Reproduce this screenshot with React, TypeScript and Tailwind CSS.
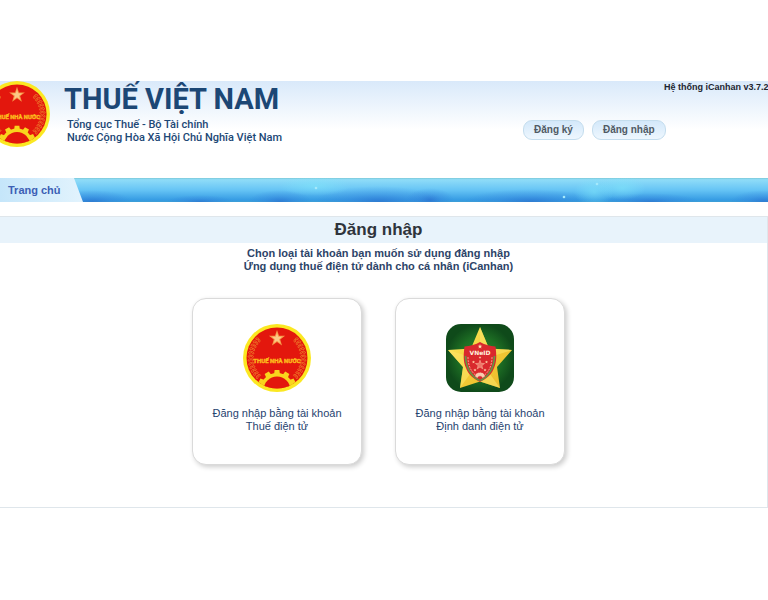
import React from "react";

const ARIAL = "font-['Liberation_Sans',Arial,sans-serif]";
const ROBOTO = "font-['Roboto',sans-serif]";

function starPoints(cx: number, cy: number, outer: number, inner: number) {
  return Array.from({ length: 10 }, (_, i) => {
    const r = i % 2 === 0 ? outer : inner;
    const a = (Math.PI / 5) * i - Math.PI / 2;
    return `${(cx + r * Math.cos(a)).toFixed(2)},${(cy + r * Math.sin(a)).toFixed(2)}`;
  }).join(" ");
}

function Seal({ className }: { className: string }) {
  const leaves = Array.from({ length: 12 }, (_, i) => -44 + i * 8);
  const teeth = [-62, -31, 0, 31, 62];
  return (
    <svg viewBox="0 0 68 68" className={className} role="img" aria-label="Thuế Nhà Nước">
      <defs>
        <clipPath id="seal-disc">
          <circle cx="34" cy="34" r="30.5" />
        </clipPath>
      </defs>
      <circle cx="34" cy="34" r="34" fill="#fbe822" />
      <circle cx="34" cy="34" r="30.5" fill="#e3170d" />
      {leaves.map((deg) => (
        <g key={deg} fill="none" stroke="#ee7428" strokeWidth="0.8">
          <g transform={`rotate(${deg} 34 34)`}>
            <ellipse cx="61.6" cy="34" rx="1.6" ry="0.9" transform="rotate(40 61.6 34)" />
            <ellipse cx="58.8" cy="34" rx="1.4" ry="0.8" transform="rotate(-40 58.8 34)" />
          </g>
          <g transform={`rotate(${-deg} 34 34)`}>
            <ellipse cx="6.4" cy="34" rx="1.6" ry="0.9" transform="rotate(-40 6.4 34)" />
            <ellipse cx="9.2" cy="34" rx="1.4" ry="0.8" transform="rotate(40 9.2 34)" />
          </g>
        </g>
      ))}
      <polygon points={starPoints(34, 14.5, 8.5, 3.4)} fill="#f79a4b" />
      <polygon points={starPoints(34, 14.5, 5.5, 2.2)} fill="#fcc987" />
      <g clipPath="url(#seal-disc)">
        {teeth.map((deg) => (
          <polygon
            key={deg}
            points="31,51 31.6,46 36.4,46 37,51"
            fill="#f9d51d"
            transform={`rotate(${deg} 34 66)`}
          />
        ))}
        <circle cx="34" cy="66" r="17" fill="#f9d51d" />
        <circle cx="34" cy="66" r="13.4" fill="#e3170d" />
      </g>
      <text
        x="34"
        y="39"
        textAnchor="middle"
        className="font-['Roboto',sans-serif] text-[6px] font-bold"
        fill="#fdb91c"
        stroke="#fdb91c"
        strokeWidth="0.4"
      >
        THUẾ NHÀ NƯỚC
      </text>
    </svg>
  );
}

function VneidLogo({ className }: { className: string }) {
  return (
    <svg viewBox="0 0 68 68" className={className} role="img" aria-label="VNeID">
      <defs>
        <radialGradient id="vneid-bg">
          <stop offset="0" stopColor="#2f8a2c" />
          <stop offset="0.6" stopColor="#1e6f24" />
          <stop offset="1" stopColor="#0f4a1a" />
        </radialGradient>
        <linearGradient id="vneid-star" x1="0" y1="0" x2="1" y2="1">
          <stop offset="0" stopColor="#fdf06a" />
          <stop offset="0.5" stopColor="#f3cb35" />
          <stop offset="1" stopColor="#e9b92c" />
        </linearGradient>
      </defs>
      <rect width="68" height="68" rx="15" fill="url(#vneid-bg)" />
      <polygon
        points="34,3 43,24.5 66,26 51,43 54,64 34,57.5 14,64 17,43 2,26 25,24.5"
        fill="url(#vneid-star)"
      />
      <path
        d="M34 3V57.5L54 64L34 36L66 26L43 24.5zM34 36L2 26L17 43zM34 36L14 64L17 43z"
        fill="#fbe567"
        opacity="0.6"
      />
      <path d="M18.5 22.5C24 22 30 20.5 34 18C38 20.5 44 22 49.5 22.5C50.5 31 51 37 48 44C45.5 51 40 55 34 58C28 55 22.5 51 20 44C17 37 17.5 31 18.5 22.5z" fill="#d9292d" />
      <path d="M19.5 32C20 45 25 52 33.5 56.5M48.5 32C48 45 43 52 34.5 56.5" fill="none" stroke="#5f9a45" strokeWidth="1.6" />
      <path d="M22 33C22 43 26 49 32 53M46 33C46 43 42 49 36 53" fill="none" stroke="#f6bf9f" strokeWidth="0.8" strokeDasharray="2 1" />
      <polygon points={starPoints(34, 22.5, 2.4, 1)} fill="#ffe6b5" />
      <text x="34" y="31" textAnchor="middle" fill="#fff2df" className="font-['DejaVu_Sans',sans-serif] text-[6px] font-bold">
        VNeID
      </text>
      <polygon points={starPoints(34, 41, 4.8, 2)} fill="#ef7668" stroke="#fbc3a4" strokeWidth="0.5" />
      <g fill="#ffd4a8">
        <polygon points={starPoints(34, 33.5, 1.4, 0.6)} />
        <polygon points={starPoints(27.5, 38, 1.6, 0.7)} />
        <polygon points={starPoints(40.5, 38, 1.6, 0.7)} />
        <polygon points={starPoints(29, 46, 1.6, 0.7)} />
        <polygon points={starPoints(39, 46, 1.6, 0.7)} />
      </g>
      <path d="M29 52.5C29 47 39 47 39 52.5L36.5 54C36 51.5 32 51.5 31.5 54z" fill="#f7cdb0" stroke="#d9292d" strokeWidth="0.5" strokeDasharray="1 1" />
    </svg>
  );
}

function PillButton({ children }: { children: React.ReactNode }) {
  return (
    <button
      type="button"
      className="h-5 cursor-pointer rounded-[9px] border border-[#c4ddee] bg-linear-to-b from-[#d3e8fa] to-[#eef7fe] px-[10px] text-[10px] leading-[18px] font-bold text-[#505a64]"
    >
      {children}
    </button>
  );
}

function Card({ logo, lines }: { logo: React.ReactNode; lines: string[] }) {
  return (
    <a
      href="#"
      className="flex w-[170px] flex-col items-center gap-[15px] rounded-[14px] border border-[#dadada] bg-white pt-[25px] pb-[31px] text-center text-[11px] leading-[13px] text-[#27436f] shadow-[2px_2px_5px_rgba(0,0,0,0.2)]"
    >
      {logo}
      <span>
        {lines.map((line) => (
          <span key={line} className="block">
            {line}
          </span>
        ))}
      </span>
    </a>
  );
}

function NavBackdrop() {
  return (
    <svg className="absolute inset-0 h-full w-full" viewBox="0 0 768 24" preserveAspectRatio="none" aria-hidden="true">
      <defs>
        <linearGradient id="nav-base" x1="0" y1="0" x2="0" y2="1">
          <stop offset="0" stopColor="#7cc9d8" />
          <stop offset="0.07" stopColor="#8fdcf8" />
          <stop offset="0.5" stopColor="#66c4f5" />
          <stop offset="0.92" stopColor="#359be3" />
          <stop offset="1" stopColor="#3f9fd4" />
        </linearGradient>
        <radialGradient id="nav-deep">
          <stop offset="0" stopColor="#2766cc" stopOpacity="0.6" />
          <stop offset="0.5" stopColor="#2f78d8" stopOpacity="0.28" />
          <stop offset="1" stopColor="#2f78d8" stopOpacity="0" />
        </radialGradient>
        <radialGradient id="nav-glow">
          <stop offset="0" stopColor="#7fe6fa" stopOpacity="0.55" />
          <stop offset="1" stopColor="#7fe6fa" stopOpacity="0" />
        </radialGradient>
      </defs>
      <rect width="768" height="24" fill="url(#nav-base)" />
      <g fill="url(#nav-deep)">
        <ellipse cx="92" cy="24" rx="40" ry="12" />
        <ellipse cx="200" cy="24" rx="34" ry="7" />
        <ellipse cx="280" cy="24" rx="32" ry="12" />
        <ellipse cx="378" cy="24" rx="64" ry="16" />
        <ellipse cx="430" cy="22" rx="24" ry="12" />
        <ellipse cx="530" cy="24" rx="66" ry="13" />
        <ellipse cx="650" cy="24" rx="50" ry="9" />
        <ellipse cx="764" cy="24" rx="34" ry="12" />
      </g>
      <g fill="url(#nav-glow)">
        <ellipse cx="315" cy="8" rx="36" ry="10" />
        <ellipse cx="594" cy="14" rx="20" ry="14" />
        <ellipse cx="622" cy="10" rx="24" ry="12" />
      </g>
      <g fill="#a5e9fb">
        <circle cx="316" cy="10" r="1.3" />
        <circle cx="597" cy="6" r="1.3" />
        <circle cx="564" cy="19" r="1.3" />
      </g>
    </svg>
  );
}

export default function App() {
  return (
    <div className={`min-h-screen overflow-x-hidden bg-white pt-[81px] ${ARIAL}`}>
      <header className="flex h-[97px] items-start overflow-hidden bg-linear-to-b from-[#d9e9fa] to-white to-50%">
        <Seal className="-ml-4 size-[66px] shrink-0" />
        <div className={`ml-[14px] shrink-0 text-[#1c4775] ${ROBOTO}`}>
          <h1 className="text-[29px] leading-[37px] font-bold">THUẾ VIỆT NAM</h1>
          <p className="pl-[3px] text-[11px] leading-[13px] font-medium">
            <span className="block">Tổng cục Thuế - Bộ Tài chính</span>
            <span className="block">Nước Cộng Hòa Xã Hội Chủ Nghĩa Việt Nam</span>
          </p>
        </div>
        <div className="ml-auto flex w-[245px] shrink-0 flex-col">
          <p className="ml-[141px] text-[9px] leading-3 font-bold whitespace-nowrap text-[#1d2530]">Hệ thống iCanhan v3.7.2</p>
          <div className="mt-[27px] flex gap-2">
            <PillButton>Đăng ký</PillButton>
            <PillButton>Đăng nhập</PillButton>
          </div>
        </div>
      </header>

      <nav className="relative h-6">
        <NavBackdrop />
        <a
          href="#"
          className="relative flex h-6 w-[83px] items-center bg-linear-to-r from-[#c5e6fa] to-[#e2f3fd] pl-2 text-[11px] font-bold text-[#3c5fb5] [clip-path:polygon(0_0,74px_0,83px_100%,0_100%)]"
        >
          Trang chủ
        </a>
      </nav>

      <main className="mt-[14px] border-y border-r border-[#dfe6eb] pb-[42px]">
        <h2 className="bg-[#e8f3fb] pr-[10px] text-center text-[17px] leading-[26px] font-bold text-[#2f343b]">Đăng nhập</h2>
        <p className="pt-1 pr-[10px] text-center text-[11px] leading-[13px] font-bold text-[#2d4468]">
          <span className="block">Chọn loại tài khoản bạn muốn sử dụng đăng nhập</span>
          <span className="block">Ứng dụng thuế điện tử dành cho cá nhân (iCanhan)</span>
        </p>
        <div className="mt-[25px] flex justify-center gap-[33px] pr-[10px]">
          <Card logo={<Seal className="size-[68px]" />} lines={["Đăng nhập bằng tài khoản", "Thuế điện tử"]} />
          <Card logo={<VneidLogo className="size-[68px]" />} lines={["Đăng nhập bằng tài khoản", "Định danh điện tử"]} />
        </div>
      </main>
    </div>
  );
}
